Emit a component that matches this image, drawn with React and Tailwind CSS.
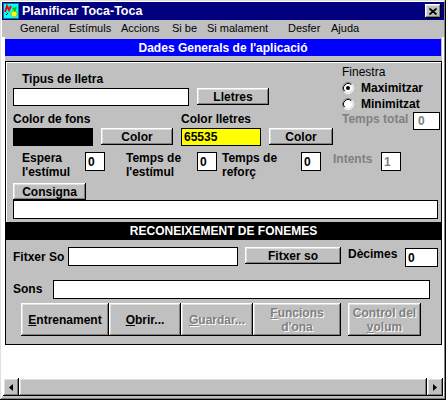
import React from "react";

const RAISED =
  "bg-[#c0c0c0] shadow-[inset_-1px_-1px_0_#000,inset_1px_1px_0_#fff,inset_-2px_-2px_0_#808080,inset_2px_2px_0_#dfdfdf]";

function Btn({ className = "", children, disabled }) {
  return (
    <div
      className={`${RAISED} flex flex-col items-center justify-center text-center font-bold text-[12px] leading-[14px] ${
        disabled ? "text-[#808080] [text-shadow:1px_1px_0_#fff]" : "text-black"
      } ${className}`}
    >
      {children}
    </div>
  );
}

function Box({ className = "", children, gray }) {
  return (
    <div
      className={`bg-white border border-black flex items-center pl-[2px] font-bold text-[12px] leading-[14px] ${
        gray ? "text-[#808080]" : "text-black"
      } ${className}`}
    >
      {children}
    </div>
  );
}

function Radio({ checked }) {
  return (
    <svg width="12" height="12" viewBox="0 0 12 12" className="shrink-0">
      <circle cx="6" cy="6" r="5" fill="#fff" />
      <path d="M2.11 9.89A5.5 5.5 0 0 1 9.89 2.11" stroke="#808080" fill="none" />
      <path d="M9.89 2.11A5.5 5.5 0 0 1 2.11 9.89" stroke="#fff" fill="none" />
      <path d="M2.82 9.18A4.5 4.5 0 0 1 9.18 2.82" stroke="#000" fill="none" />
      <path d="M9.18 2.82A4.5 4.5 0 0 1 2.82 9.18" stroke="#dfdfdf" fill="none" />
      {checked && <circle cx="6" cy="6" r="2" fill="#000" />}
    </svg>
  );
}

function AppIcon() {
  return (
    <svg width="16" height="16" viewBox="0 0 16 16" className="shrink-0">
      <rect x="0.5" y="0.5" width="15" height="15" fill="#00ffff" stroke="#008080" />
      <path d="M2 9 L4 3 L6 7 L8 3" stroke="#ff0000" strokeWidth="2" fill="none" />
      <path d="M3 12 L5 10" stroke="#000" strokeWidth="1" />
      <circle cx="11" cy="11" r="3" fill="#ffff00" stroke="#808000" strokeWidth="0.5" />
      <path d="M9 5 L14 4 L12 9 Z" fill="#00c000" />
    </svg>
  );
}

export default function App() {
  return (
    <div className="w-[446px] h-[400px] bg-[#c0c0c0] pt-[2px] px-[2px] pb-[4px] flex flex-col font-['Liberation_Sans',Arial,sans-serif] text-black shadow-[inset_-1px_-1px_0_#000,inset_1px_1px_0_#dfdfdf,inset_-2px_-2px_0_#808080,inset_2px_2px_0_#fff]">
      {/* Title bar */}
      <div className="h-[18px] shrink-0 bg-[#000080] flex items-center pl-[1px] pr-[3px]">
        <AppIcon />
        <span className="ml-[3px] text-white font-bold text-[12.5px] leading-[14px]">
          Planificar Toca-Toca
        </span>
        <div className={`ml-auto w-[16px] h-[14px] ${RAISED} flex items-center justify-center`}>
          <svg width="8" height="7" viewBox="0 0 8 7">
            <path d="M0.5 0.5 L7.5 6.5 M7.5 0.5 L0.5 6.5" stroke="#000" strokeWidth="1.7" />
          </svg>
        </div>
      </div>

      {/* Menu bar */}
      <div className="h-[17px] shrink-0 flex items-center pl-[18px] text-[11px] leading-[17px]">
        <span className="w-[49px]">General</span>
        <span className="w-[52px]">Estímuls</span>
        <span className="w-[51px]">Accions</span>
        <span className="w-[35px]">Si be</span>
        <span className="w-[81px]">Si malament</span>
        <span className="w-[43px]">Desfer</span>
        <span>Ajuda</span>
      </div>

      {/* Client area */}
      <div className="flex-1 bg-white flex flex-col">
        <div className="ml-[3px] w-[437px] h-[308px] shrink-0 bg-[#c0c0c0] pt-[2px] flex flex-col text-[12px]">
          <div className="w-[436px] h-[17px] bg-[#0000ff] text-white font-bold flex items-center justify-center leading-[14px]">
            Dades Generals de l'aplicació
          </div>

          {/* Panel 1 */}
          <div className="mt-[5px] w-[437px] h-[161px] border-x border-t border-black flex flex-col shadow-[inset_1px_1px_0_#fff]">
            <div className="flex h-[84px] shrink-0">
              <div className="ml-[7px] w-[328px] flex flex-col">
                <div className="mt-[10px] pl-[9px] h-[14px] leading-[14px] font-bold">Tipus de lletra</div>
                <div className="mt-[2px] flex items-start">
                  <div className="w-[176px] h-[18px] bg-white border border-black" />
                  <Btn className="ml-[8px] w-[72px] h-[17px]">Lletres</Btn>
                </div>
                <div className="mt-[6px] flex h-[14px] leading-[14px] font-bold">
                  <span className="w-[168px]">Color de fons</span>
                  <span>Color lletres</span>
                </div>
                <div className="mt-[2px] flex items-start">
                  <div className="w-[80px] h-[18px] bg-black" />
                  <Btn className="ml-[8px] w-[72px] h-[17px]">Color</Btn>
                  <div className="ml-[8px] w-[80px] h-[18px] bg-[#ffff00] border border-black flex items-center pl-[2px] font-bold leading-[14px]">
                    65535
                  </div>
                  <Btn className="ml-[8px] w-[64px] h-[17px]">Color</Btn>
                </div>
              </div>
              <div className="w-[100px] flex flex-col">
                <div className="mt-[3px] pl-[1px] h-[14px] leading-[14px]">Finestra</div>
                <div className="mt-[1px] pl-[1px] h-[16px] flex items-center gap-[7px] font-bold leading-[14px]">
                  <Radio checked />
                  <span>Maximitzar</span>
                </div>
                <div className="pl-[1px] h-[16px] flex items-center gap-[7px] font-bold leading-[14px]">
                  <Radio />
                  <span>Minimitzat</span>
                </div>
                <div className="h-[18px] flex items-start justify-between pl-[1px] pr-[1px]">
                  <span className="text-[#808080] font-bold leading-[14px]">Temps total</span>
                  <Box gray className="w-[27px] h-[18px] pl-[4px]">0</Box>
                </div>
              </div>
            </div>

            <div className="mt-[5px] flex items-start h-[28px] shrink-0 font-bold leading-[14px]">
              <div className="ml-[16px] w-[63px]">
                Espera
                <br />
                l'estímul
              </div>
              <Box className="mt-[1px] w-[20px] h-[19px]">0</Box>
              <div className="ml-[21px] w-[71px]">
                Temps de
                <br />
                l'estímul
              </div>
              <Box className="mt-[1px] w-[20px] h-[19px]">0</Box>
              <div className="ml-[5px] w-[79px]">
                Temps de
                <br />
                reforç
              </div>
              <Box className="mt-[1px] w-[20px] h-[19px]">0</Box>
              <div className="ml-[12px] mt-[1px] w-[48px] text-[#808080]">Intents</div>
              <Box gray className="mt-[1px] w-[20px] h-[19px]">1</Box>
            </div>

            <Btn className="mt-[4px] ml-[7px] w-[73px] h-[17px] shrink-0">Consigna</Btn>
            <div className="ml-[7px] w-[425px] h-[19px] shrink-0 bg-white border border-black" />
          </div>

          {/* Panel 2 */}
          <div className="w-[437px] h-[123px] border-x border-b border-black flex flex-col">
            <div className="h-[18px] shrink-0 bg-black text-white font-bold flex items-center justify-center leading-[14px]">
              RECONEIXEMENT DE FONEMES
            </div>

            <div className="mt-[7px] flex items-start h-[19px] shrink-0">
              <div className="ml-[7px] w-[55px] h-[19px] flex items-center font-bold leading-[14px]">Fitxer So</div>
              <div className="w-[170px] h-[19px] bg-white border border-black" />
              <Btn className="ml-[7px] w-[96px] h-[17px]">Fitxer so</Btn>
              <div className="ml-[7px] w-[57px] leading-[14px] font-bold">Dècimes</div>
              <Box className="mt-[1px] w-[33px] h-[19px]">0</Box>
            </div>

            <div className="mt-[14px] flex items-start shrink-0">
              <div className="ml-[7px] mt-[2px] w-[40px] leading-[14px] font-bold">Sons</div>
              <div className="w-[377px] h-[19px] bg-white border border-black" />
            </div>

            <div className="mt-[4px] ml-[15px] flex h-[33px] shrink-0">
              <Btn className="w-[88px] h-[33px]">
                <span>
                  <u className="underline-offset-1">E</u>ntrenament
                </span>
              </Btn>
              <Btn className="w-[72px] h-[33px]">
                <span>
                  <u className="underline-offset-1">O</u>brir...
                </span>
              </Btn>
              <Btn disabled className="w-[72px] h-[33px]">
                <span>
                  <u className="underline-offset-1">G</u>uardar...
                </span>
              </Btn>
              <Btn disabled className="w-[88px] h-[33px]">
                <span>
                  <u className="underline-offset-1">F</u>uncions
                </span>
                <span>d'ona</span>
              </Btn>
              <Btn disabled className="ml-[7px] w-[73px] h-[33px]">
                <span>Control del</span>
                <span>
                  <u className="underline-offset-1">v</u>olum
                </span>
              </Btn>
            </div>
          </div>
        </div>

        <div className="flex-1" />

        {/* Horizontal scrollbar */}
        <div className="mx-[1px] h-[18px] shrink-0 flex bg-[#c0c0c0]">
          <div className={`${RAISED} w-[16px] h-[18px] flex items-center justify-center`}>
            <svg width="4" height="7" viewBox="0 0 4 7">
              <path d="M4 0 V7 L0 3.5 Z" fill="#000" />
            </svg>
          </div>
          <div className={`${RAISED} flex-1 h-[18px]`} />
          <div className={`${RAISED} w-[16px] h-[18px] flex items-center justify-center`}>
            <svg width="4" height="7" viewBox="0 0 4 7">
              <path d="M0 0 V7 L4 3.5 Z" fill="#000" />
            </svg>
          </div>
        </div>
      </div>
    </div>
  );
}
